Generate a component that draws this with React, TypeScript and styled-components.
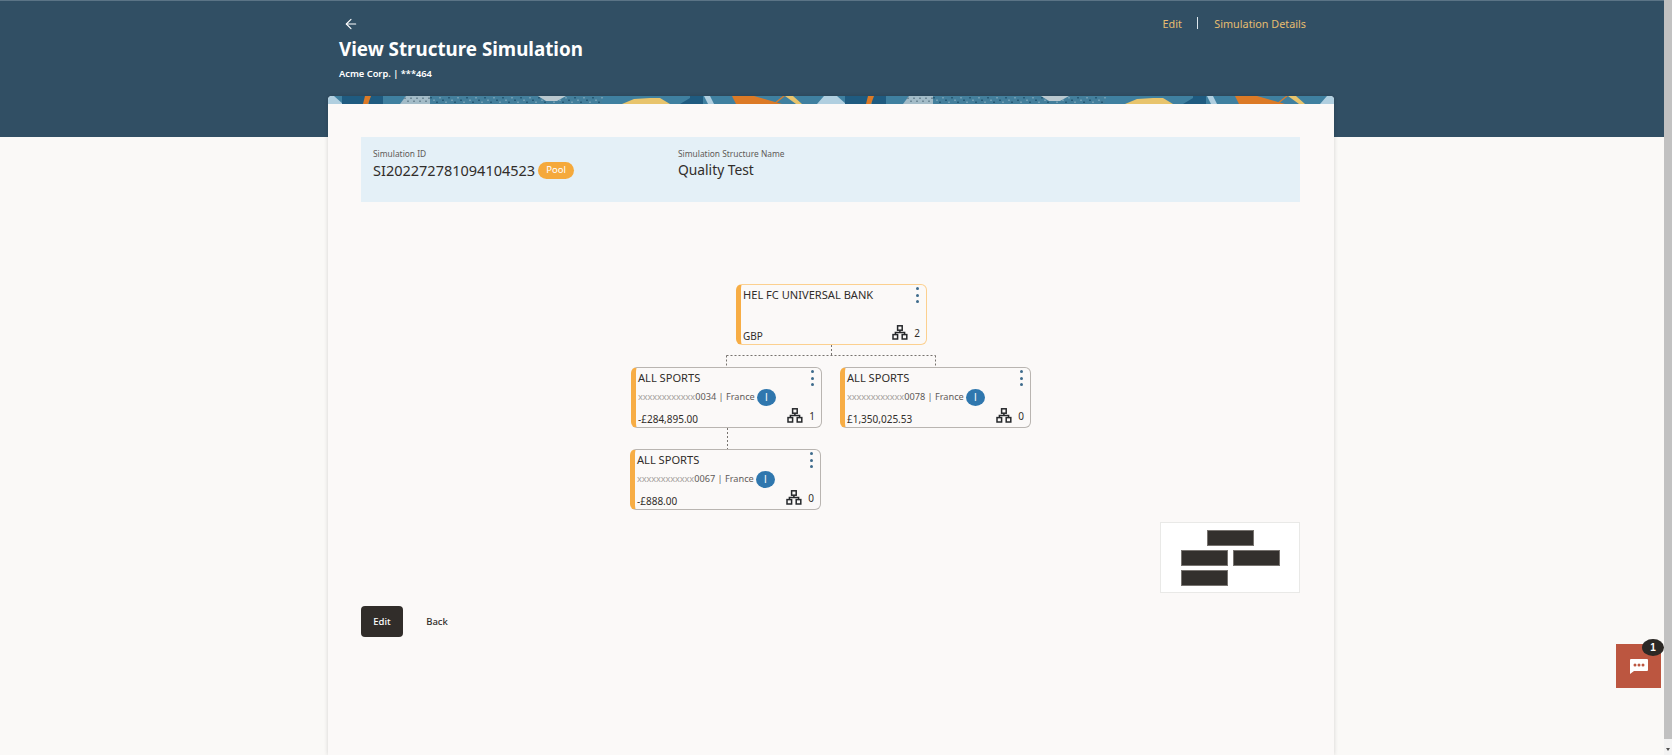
import React from "react";
import styled, { createGlobalStyle } from "styled-components";
import { ArrowLeft } from "lucide-react";

const GlobalStyle = createGlobalStyle`
  html, body {
    margin: 0;
    height: 100%;
    overflow: hidden;
    background: #faf9f7;
    font-family: "Noto Sans", "Open Sans", sans-serif;
    color: #312d2a;
  }
`;

const Page = styled.div`
  display: flex;
  height: 755px;
  overflow: hidden;
`;

const Main = styled.main`
  position: relative;
  flex: 1;
  min-width: 0;
`;

const Hero = styled.header`
  box-sizing: border-box;
  height: 137px;
  padding: 14px 358px 0 339px;
  background: #314f64;
  border-top: 1px solid #5b7486;
`;

const HeroTop = styled.div`
  display: flex;
  justify-content: space-between;
  align-items: center;
  height: 18px;
`;

const BackArrow = styled.button`
  display: flex;
  padding: 0;
  margin-left: 4px;
  border: 0;
  background: none;
  color: #fff;
`;

const HeroNav = styled.nav`
  display: flex;
  align-items: center;
  margin-top: -2px;
  font-size: 10.8px;
  color: #e6bd70;
`;

const NavDivider = styled.span`
  width: 1.5px;
  height: 12px;
  margin: 0 16px 0 15px;
  background: #dfe8ee;
`;

const Title = styled.h1`
  margin: 3px 0 0;
  font-size: 18.8px;
  line-height: 26px;
  font-weight: 700;
  color: #fff;
`;

const SubTitle = styled.p`
  margin: 5px 0 0;
  font-size: 9.3px;
  line-height: 14px;
  font-weight: 600;
  color: #fff;
`;

const Card = styled.section`
  box-sizing: border-box;
  width: 1006px;
  height: 659px;
  margin: -41px 0 0 328px;
  position: relative;
  background: #fbf9f8;
  border-radius: 4px 4px 0 0;
  box-shadow: 0 0 4px rgba(0, 0, 0, 0.16);
  overflow: hidden;
`;

const BannerArt = styled.svg`
  display: block;
  width: 1006px;
  height: 8px;
`;

const CardBody = styled.div`
  padding: 33px 34px 0 33px;
`;

const InfoBox = styled.div`
  box-sizing: border-box;
  height: 65px;
  padding: 10px 12px;
  display: flex;
  background: #e4f0f7;
`;

const InfoColumn = styled.div<{ $width: number }>`
  width: ${({ $width }) => $width}px;
`;

const InfoLabel = styled.div`
  font-size: 8.4px;
  line-height: 13px;
  color: #5f5b58;
`;

const InfoValue = styled.div<{ $size: number }>`
  display: flex;
  align-items: center;
  gap: 3px;
  font-size: ${({ $size }) => $size}px;
  line-height: 20px;
  color: #312d2a;
`;

const PoolTag = styled.span`
  display: inline-flex;
  align-items: center;
  justify-content: center;
  width: 36px;
  height: 17px;
  border-radius: 9px;
  background: #f5a93b;
  color: #fff;
  font-size: 9.5px;
`;

const Canvas = styled.div`
  position: relative;
  height: 391px;
`;

const Wires = styled.svg`
  position: absolute;
  inset: 0;
  width: 100%;
  height: 100%;
`;

const NodeBox = styled.article<{ $x: number; $y: number; $root?: boolean }>`
  position: absolute;
  left: ${({ $x }) => $x}px;
  top: ${({ $y }) => $y}px;
  box-sizing: border-box;
  width: 191px;
  height: 61px;
  padding: 0 6px 1px 2px;
  display: flex;
  flex-direction: column;
  justify-content: space-between;
  background: #fbf9f8;
  border: ${({ $root }) => ($root ? "1.5px solid #fcd08f" : "1px solid #b9b5b1")};
  border-left: 5px solid #f7ad45;
  border-radius: 6px;
`;

const NodeRow = styled.div`
  display: flex;
  align-items: center;
  justify-content: space-between;
  min-height: 19px;
`;

const NodeTitle = styled.div`
  font-size: 11.1px;
  line-height: 16px;
  margin-top: 2px;
  align-self: flex-start;
  color: #312d2a;
`;

const Dots = styled.div`
  display: flex;
  flex-direction: column;
  gap: 3.5px;
  margin: 2px 1px 0 0;
  align-self: flex-start;
`;

const Dot = styled.span`
  width: 3px;
  height: 3px;
  border-radius: 50%;
  background: #3e6b8c;
`;

const AccountLine = styled.div`
  display: flex;
  align-items: center;
  gap: 2px;
  font-size: 9.2px;
  line-height: 16px;
  color: #5f5b58;
`;

const Masked = styled.span`
  color: #a5a19d;
  letter-spacing: -0.1px;
`;

const InfoBadge = styled.span`
  display: inline-flex;
  align-items: center;
  justify-content: center;
  width: 19px;
  height: 17px;
  border-radius: 50%;
  background: #2f77ae;
  color: #fff;
  font: 10px "Liberation Sans", sans-serif;
`;

const Amount = styled.div`
  font-size: 10px;
  line-height: 14px;
  color: #312d2a;
  align-self: flex-end;
`;

const ChildCount = styled.div`
  display: flex;
  align-items: center;
  gap: 6px;
  margin: 0 0 2px 0;
  font-size: 10px;
  color: #312d2a;
`;

const MiniMap = styled.div`
  position: absolute;
  right: 0;
  bottom: 0;
  box-sizing: border-box;
  width: 140px;
  height: 71px;
  padding-top: 7px;
  display: flex;
  flex-direction: column;
  gap: 4px;
  background: #fff;
  border: 1px solid #e9e9e7;
`;

const MiniRow = styled.div<{ $indent: number }>`
  display: flex;
  gap: 5px;
  padding-left: ${({ $indent }) => $indent}px;
`;

const MiniBar = styled.span`
  box-sizing: border-box;
  width: 47px;
  height: 16px;
  background: #33302d;
  border: 0.5px solid #77736f;
`;

const Actions = styled.div`
  display: flex;
  align-items: center;
  gap: 3px;
  margin-top: 13px;
`;

const Button = styled.button<{ $primary?: boolean }>`
  box-sizing: border-box;
  height: 31px;
  width: ${({ $primary }) => ($primary ? 42 : 62)}px;
  padding: 0;
  border: 0;
  border-radius: 4px;
  background: ${({ $primary }) => ($primary ? "#312d2a" : "transparent")};
  color: ${({ $primary }) => ($primary ? "#fff" : "#312d2a")};
  font: 500 9.5px "Noto Sans", sans-serif;
`;

const ChatButton = styled.button`
  position: absolute;
  right: 3px;
  top: 644px;
  width: 45px;
  height: 44px;
  display: flex;
  align-items: center;
  justify-content: center;
  padding: 0;
  border: 0;
  background: #bc5640;
`;

const ChatCount = styled.span`
  position: absolute;
  top: -5px;
  right: -3px;
  width: 22px;
  height: 17px;
  display: flex;
  align-items: center;
  justify-content: center;
  border-radius: 50%;
  background: #2b2825;
  color: #fff;
  font-size: 10px;
  font-weight: 700;
`;

const ScrollTrack = styled.div`
  width: 8px;
  display: flex;
  flex-direction: column;
  background: #f3f3f3;
`;

const ScrollThumb = styled.div`
  height: 739px;
  background: #c1c1c1;
`;

const ScrollArrow = styled.div`
  margin: 9px auto 0;
  width: 0;
  height: 0;
  border-left: 2.5px solid transparent;
  border-right: 2.5px solid transparent;
  border-top: 3px solid #505050;
`;

// repeating art along the top edge of the card, one tile is 503px
function BannerPattern() {
  const specks = Array.from({ length: 58 }, (_, i) => i);
  const greySpecks = Array.from({ length: 9 }, (_, i) => i);
  return (
    <BannerArt viewBox="0 0 1006 8" aria-hidden="true">
      <defs>
        <pattern
          id="tile"
          width="503"
          height="8"
          patternUnits="userSpaceOnUse"
          patternTransform="translate(-16 0)"
        >
          <rect width="503" height="8" fill="#3f80a0" />
          <polygon points="2,8 9,0 22,0 31,8" fill="#b0cfe0" />
          <rect x="30" width="24" height="8" fill="#1f5b80" />
          <rect x="57" width="14" height="8" fill="#1f5b80" />
          <polygon points="51,8 53,0 59,0 56,8" fill="#dc7a26" />
          <polygon points="88,8 94,0 118,0 118,8" fill="#a3bcc8" />
          {greySpecks.map((i) => (
            <rect key={i} x={92 + i * 3} y={i % 2 === 0 ? 1.5 : 4.5} width="2" height="1.5" fill="#6f8a98" />
          ))}
          <rect x="118" width="172" height="8" fill="#437f9c" />
          {specks.map((i) => (
            <rect
              key={i}
              x={118 + i * 3}
              y={i % 3 === 0 ? 1 : i % 3 === 1 ? 3.5 : 5.5}
              width="2"
              height="1.5"
              fill={i % 2 === 0 ? "#265a76" : "#6f9db3"}
            />
          ))}
          <polygon points="226,0 254,0 245,5 234,5" fill="#b9c8cf" />
          <polygon points="310,8 322,3 338,2 348,2 358,8" fill="#e8c46c" />
          <polygon points="368,8 378,2 388,8" fill="#1f5b80" />
          <rect x="378" width="13" height="8" fill="#1f5b80" />
          <polygon points="392,0 398,0 402,8 396,8" fill="#b0cfe0" />
          <polygon points="420,0 442,0 470,8 424,8" fill="#dc7a26" />
          <polygon points="461,8 471,0 473,0 463,8" fill="#dc7a26" />
          <polygon points="473,0 481,0 490,8 484,8" fill="#e8c46c" />
        </pattern>
      </defs>
      <rect width="1006" height="8" fill="url(#tile)" />
    </BannerArt>
  );
}

function HierarchyIcon() {
  return (
    <svg width="16" height="15" viewBox="0 0 16 15" fill="none" stroke="#26282b" strokeWidth="1.5">
      <rect x="5.6" y="0.8" width="4.6" height="4.4" />
      <path d="M7.9 5.2V7.6M3.4 9.6V7.6H12.6V9.6" />
      <rect x="1" y="9.6" width="4.6" height="4.4" />
      <rect x="10.2" y="9.6" width="4.6" height="4.4" />
    </svg>
  );
}

type AccountNode = {
  x: number;
  y: number;
  account: string;
  amount: string;
  children: number;
};

const accountNodes: AccountNode[] = [
  { x: 270, y: 165, account: "0034", amount: "-£284,895.00", children: 1 },
  { x: 479, y: 165, account: "0078", amount: "£1,350,025.53", children: 0 },
  { x: 269, y: 247, account: "0067", amount: "-£888.00", children: 0 },
];

function NodeMenu() {
  return (
    <Dots>
      <Dot />
      <Dot />
      <Dot />
    </Dots>
  );
}

function App() {
  return (
    <>
      <GlobalStyle />
      <Page>
        <Main>
          <Hero>
            <HeroTop>
              <BackArrow aria-label="Back">
                <ArrowLeft size={16} strokeWidth={1.7} />
              </BackArrow>
              <HeroNav>
                <span>Edit</span>
                <NavDivider />
                <span>Simulation Details</span>
              </HeroNav>
            </HeroTop>
            <Title>View Structure Simulation</Title>
            <SubTitle>Acme Corp. | ***464</SubTitle>
          </Hero>

          <Card>
            <BannerPattern />
            <CardBody>
              <InfoBox>
                <InfoColumn $width={305}>
                  <InfoLabel>Simulation ID</InfoLabel>
                  <InfoValue $size={14.5}>
                    SI202272781094104523
                    <PoolTag>Pool</PoolTag>
                  </InfoValue>
                </InfoColumn>
                <InfoColumn $width={300}>
                  <InfoLabel>Simulation Structure Name</InfoLabel>
                  <InfoValue $size={13.8}>Quality Test</InfoValue>
                </InfoColumn>
              </InfoBox>

              <Canvas>
                <Wires fill="none" stroke="#77736f" strokeDasharray="2 2">
                  <path d="M470.5 143V153.5M365.5 153.5H574.5M365.5 153.5V165M574.5 153.5V165M366.5 226V247" />
                </Wires>

                <NodeBox $x={375} $y={82} $root>
                  <NodeRow>
                    <NodeTitle>HEL FC UNIVERSAL BANK</NodeTitle>
                    <NodeMenu />
                  </NodeRow>
                  <NodeRow>
                    <Amount>GBP</Amount>
                    <ChildCount>
                      <HierarchyIcon />2
                    </ChildCount>
                  </NodeRow>
                </NodeBox>

                {accountNodes.map((node) => (
                  <NodeBox key={node.account} $x={node.x} $y={node.y}>
                    <NodeRow>
                      <NodeTitle>ALL SPORTS</NodeTitle>
                      <NodeMenu />
                    </NodeRow>
                    <AccountLine>
                      <span>
                        <Masked>xxxxxxxxxxxx</Masked>
                        {node.account} | France
                      </span>
                      <InfoBadge>I</InfoBadge>
                    </AccountLine>
                    <NodeRow>
                      <Amount>{node.amount}</Amount>
                      <ChildCount>
                        <HierarchyIcon />
                        {node.children}
                      </ChildCount>
                    </NodeRow>
                  </NodeBox>
                ))}

                <MiniMap>
                  <MiniRow $indent={46}>
                    <MiniBar />
                  </MiniRow>
                  <MiniRow $indent={20}>
                    <MiniBar />
                    <MiniBar />
                  </MiniRow>
                  <MiniRow $indent={20}>
                    <MiniBar />
                  </MiniRow>
                </MiniMap>
              </Canvas>

              <Actions>
                <Button $primary>Edit</Button>
                <Button>Back</Button>
              </Actions>
            </CardBody>
          </Card>

          <ChatButton aria-label="Chat">
            <svg width="18" height="15" viewBox="0 0 18 15">
              <path d="M1 0H17A1 1 0 0 1 18 1V11A1 1 0 0 1 17 12H4L0 15V1A1 1 0 0 1 1 0Z" fill="#fff" />
              <circle cx="5" cy="6" r="1.5" fill="#bc5640" />
              <circle cx="9" cy="6" r="1.5" fill="#bc5640" />
              <circle cx="13" cy="6" r="1.5" fill="#bc5640" />
            </svg>
            <ChatCount>1</ChatCount>
          </ChatButton>
        </Main>
        <ScrollTrack>
          <ScrollThumb />
          <ScrollArrow />
        </ScrollTrack>
      </Page>
    </>
  );
}

export default App;
